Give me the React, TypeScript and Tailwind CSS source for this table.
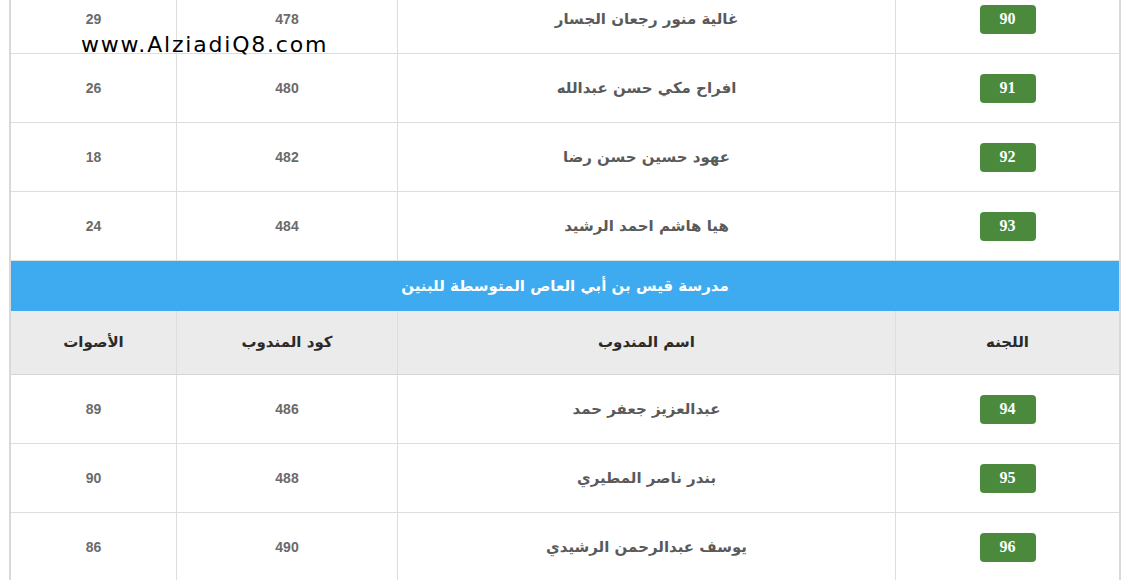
import React from 'react';

interface Row {
    lajna: number;
    name: string;
    code: number;
    votes: number;
}

const topRows: Row[] = [
    { lajna: 90, name: 'غالية منور رجعان الجسار', code: 478, votes: 29 },
    { lajna: 91, name: 'افراح مكي حسن عبدالله', code: 480, votes: 26 },
    { lajna: 92, name: 'عهود حسين حسن رضا', code: 482, votes: 18 },
    { lajna: 93, name: 'هيا هاشم احمد الرشيد', code: 484, votes: 24 },
];

const bottomRows: Row[] = [
    { lajna: 94, name: 'عبدالعزيز جعفر حمد', code: 486, votes: 89 },
    { lajna: 95, name: 'بندر ناصر المطيري', code: 488, votes: 90 },
    { lajna: 96, name: 'يوسف عبدالرحمن الرشيدي', code: 490, votes: 86 },
];

const gridCols = 'grid grid-cols-[224px_498px_221px_165px]';
const arabic = "font-['DejaVu_Sans',sans-serif]";

const DataRow: React.FC<{ row: Row }> = ({ row }) => (
    <div className={`${gridCols} h-[69px] border-b border-[#dedede]`}>
        <div className="flex items-center justify-center border-l border-[#dedede]">
            <span className="flex h-[29px] w-[56px] items-center justify-center rounded-[4px] bg-[#4b8a3c] font-['Liberation_Serif',serif] text-[16px] font-bold text-white">
                {row.lajna}
            </span>
        </div>
        <div className={`flex items-center justify-center border-l border-[#dedede] ${arabic} text-[15px] font-bold text-[#5a5a5a]`}>
            {row.name}
        </div>
        <div className="flex items-center justify-center border-l border-[#dedede] font-['Liberation_Sans',sans-serif] text-[14px] font-bold text-[#6b6b6b]">
            {row.code}
        </div>
        <div className="flex items-center justify-center font-['Liberation_Sans',sans-serif] text-[14px] font-bold text-[#6b6b6b]">
            {row.votes}
        </div>
    </div>
);

export default function App() {
    return (
        <div className="relative h-[580px] w-[1128px] overflow-hidden bg-white">
            <div dir="rtl" className="-mt-[15px] ml-[9px] w-[1112px] border-x-2 border-[#d9d9d9]">
                {topRows.map((r) => (
                    <DataRow key={r.lajna} row={r} />
                ))}
                <div className={`flex h-[50px] items-center justify-center bg-[#3eabf0] ${arabic} text-[15px] font-bold text-white`}>
                    مدرسة قيس بن أبي العاص المتوسطة للبنين
                </div>
                <div className={`${gridCols} h-[64px] border-b border-[#d6d6d6] bg-[#ebebeb] ${arabic} text-[15px] font-bold text-[#2a2a2a]`}>
                    <div className="flex items-center justify-center border-l border-[#dedede]">اللجنه</div>
                    <div className="flex items-center justify-center border-l border-[#dedede]">اسم المندوب</div>
                    <div className="flex items-center justify-center border-l border-[#dedede]">كود المندوب</div>
                    <div className="flex items-center justify-center">الأصوات</div>
                </div>
                {bottomRows.map((r) => (
                    <DataRow key={r.lajna} row={r} />
                ))}
            </div>
            <div className="absolute left-[81px] top-[34px] font-['DejaVu_Sans',sans-serif] text-[22px] leading-none tracking-[1.8px] text-black">
                www.AlziadiQ8.com
            </div>
        </div>
    );
}
